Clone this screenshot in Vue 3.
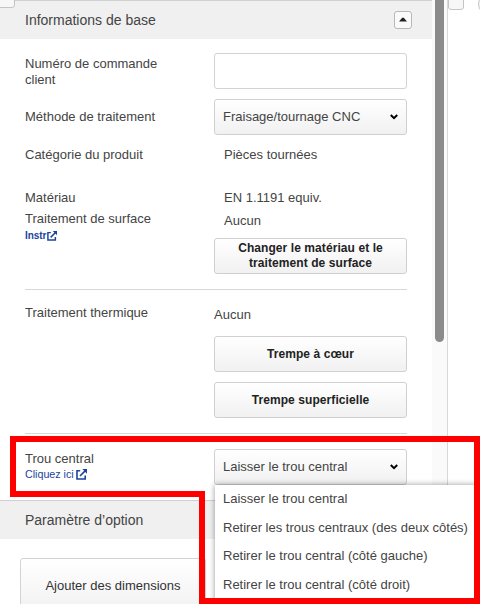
<template>
  <div class="viewport">
    <div class="panel">
      <div class="section-header">
        <span>Informations de base</span>
        <button class="collapse-btn" type="button">
          <svg width="8" height="5" viewBox="0 0 8 5"><path d="M0 4.5L3.2 0.8h1.6L8 4.5z" fill="#222" /></svg>
        </button>
      </div>

      <div class="section-body">
        <div class="row order-row">
          <label class="label order-label">Numéro de commande client</label>
          <input v-model="orderNumber" class="text-input" type="text" />
        </div>

        <div class="row">
          <span class="label">Méthode de traitement</span>
          <div class="select">
            <span>Fraisage/tournage CNC</span>
            <svg class="chevron" width="8" height="6" viewBox="0 0 8 6"><path d="M0.8 1L4 4.2L7.2 1" /></svg>
          </div>
        </div>

        <div class="row category-row">
          <span class="label">Catégorie du produit</span>
          <span class="value indent">Pièces tournées</span>
        </div>

        <div class="row material-row">
          <div class="stack">
            <span class="label">Matériau</span>
            <span class="label surface-label">Traitement de surface</span>
            <a class="link bold">Instr<svg class="ext" width="10" height="10" viewBox="0 0 11 11"><path d="M4.2 1.8H1v8.2h8.2V6.6M4 7L9.4 1.6" /><path class="tip" d="M6.3 0H11v4.7z" /></svg></a>
          </div>
          <div class="stack">
            <span class="value indent">EN 1.1191 equiv.</span>
            <span class="value indent surface-value">Aucun</span>
            <button class="btn material-btn" type="button">Changer le matériau et le traitement de surface</button>
          </div>
        </div>

        <hr class="divider" />

        <div class="row heat-row">
          <span class="label">Traitement thermique</span>
          <div class="stack">
            <span class="value heat-value">Aucun</span>
            <div class="heat-buttons">
              <button v-for="name in heatTreatments" :key="name" class="btn" type="button">{{ name }}</button>
            </div>
          </div>
        </div>

        <hr class="divider" />

        <div class="row hole-row">
          <div class="stack">
            <span class="label">Trou central</span>
            <a class="link">Cliquez ici<svg class="ext large" width="11" height="11" viewBox="0 0 11 11"><path d="M4.2 1.8H1v8.2h8.2V6.6M4 7L9.4 1.6" /><path class="tip" d="M6.3 0H11v4.7z" /></svg></a>
          </div>
          <div class="select">
            <span>{{ holeOptions[0] }}</span>
            <svg class="chevron" width="8" height="6" viewBox="0 0 8 6"><path d="M0.8 1L4 4.2L7.2 1" /></svg>
            <ul class="menu">
              <li v-for="option in holeOptions" :key="option">{{ option }}</li>
            </ul>
          </div>
        </div>
      </div>

      <div class="section-header">
        <span>Paramètre d’option</span>
      </div>
      <div class="option-body">
        <button class="add-btn" type="button">Ajouter des dimensions</button>
      </div>
    </div>

    <div class="scroll-track">
      <div class="scroll-thumb"></div>
    </div>

    <span class="corner corner-left"></span>
    <span class="corner corner-mid"></span>
    <span class="corner corner-right"></span>

    <svg class="highlight" width="480" height="604" viewBox="0 0 480 604">
      <path d="M13 439H477V601H202V494H13Z" />
    </svg>
  </div>
</template>

<script setup>
import { ref } from 'vue';

const orderNumber = ref('');

const heatTreatments = ['Trempe à cœur', 'Trempe superficielle'];

const holeOptions = [
  'Laisser le trou central',
  'Retirer les trous centraux (des deux côtés)',
  'Retirer le trou central (côté gauche)',
  'Retirer le trou central (côté droit)'
];
</script>

<style>
body {
  margin: 0;
  background: #fff;
}
</style>

<style scoped>
.viewport {
  position: relative;
  display: flex;
  width: 480px;
  height: 604px;
  overflow: hidden;
  font-family: 'Liberation Sans', Arial, sans-serif;
  font-size: 13px;
  line-height: 16px;
  color: #444;
  background: #fff;
}

.viewport * {
  box-sizing: border-box;
}

.panel {
  width: 432px;
  flex: none;
}

.section-header {
  display: flex;
  justify-content: space-between;
  align-items: center;
  height: 39px;
  padding: 0 20px 1px 25px;
  border-top: 1px solid #d0d0d0;
  background: #f0f0f0;
  font-size: 14px;
}

.collapse-btn {
  display: flex;
  align-items: center;
  justify-content: center;
  width: 18px;
  height: 18px;
  padding: 0;
  border: 1px solid #b8b8b8;
  border-radius: 3px;
  background: #fafafa;
}

.section-body {
  height: 461px;
  padding: 14px 25px 0;
}

.row {
  display: grid;
  grid-template-columns: 189px 193px;
  align-items: center;
}

.order-row {
  margin-bottom: 10px;
}

.order-label {
  padding: 1px 40px 0 0;
}

.text-input {
  width: 193px;
  height: 36px;
  border: 1px solid #d3d3d3;
  border-radius: 3px;
  background: #fff;
}

.select {
  position: relative;
  display: flex;
  justify-content: space-between;
  align-items: center;
  height: 36px;
  padding: 0 8px;
  border: 1px solid #d0d0d0;
  border-radius: 3px;
  background: linear-gradient(#fff, #f1f1f1);
}

.chevron path {
  fill: none;
  stroke: #000;
  stroke-width: 2;
}

.category-row {
  margin-top: 12px;
}

.indent {
  padding-left: 10px;
}

.stack {
  display: flex;
  flex-direction: column;
}

.material-row {
  align-items: start;
  margin-top: 27px;
}

.surface-label {
  margin-top: 5px;
}

.surface-value {
  margin-top: 7px;
}

.link {
  display: flex;
  align-items: center;
  height: 14px;
  font-size: 10.7px;
  color: #1a44a0;
}

.link.bold {
  margin-top: 2px;
  font-size: 10px;
  font-weight: bold;
  letter-spacing: -0.1px;
}

.ext {
  margin-left: 1px;
}

.ext.large {
  margin-left: 2px;
}

.ext path {
  fill: none;
  stroke: #1a44a0;
  stroke-width: 1.6;
}

.ext .tip {
  fill: #1a44a0;
  stroke: none;
}

.btn {
  width: 193px;
  height: 36px;
  padding: 0 10px;
  border: 1px solid #d0d0d0;
  border-radius: 3px;
  background: linear-gradient(#fff, #f1f1f1);
  font-family: inherit;
  font-size: 12px;
  font-weight: bold;
  line-height: 15px;
  letter-spacing: 0.08px;
  color: #222;
}

.material-btn {
  margin-top: 9px;
}

.divider {
  height: 1px;
  margin: 15px 0 0;
  border: 0;
  background: #d8d8d8;
}

.heat-row {
  align-items: start;
  margin-top: 15px;
}

.heat-value {
  margin-top: 2px;
}

.heat-buttons {
  display: flex;
  flex-direction: column;
  gap: 10px;
  margin-top: 13px;
}

.hole-row {
  align-items: start;
  margin-top: 15px;
}

.hole-row .stack {
  padding-top: 2px;
}

.menu {
  position: absolute;
  top: 35px;
  left: 0;
  width: 262px;
  height: 120px;
  margin: 0;
  padding: 0 8px;
  list-style: none;
  background: #fff;
  box-shadow: 0 0 6px rgba(0, 0, 0, 0.4);
}

.menu li {
  height: 28.7px;
  line-height: 28px;
  white-space: nowrap;
}

.option-body {
  padding: 19px 20px 0;
}

.add-btn {
  width: 186px;
  height: 56px;
  padding: 0 0 1px;
  border: 1px solid #d3d3d3;
  border-radius: 3px;
  background: linear-gradient(#fff, #f1f1f1);
  font-family: inherit;
  font-size: 13px;
  color: #333;
}

/* scrollbar between the form and the preview pane */
.scroll-track {
  width: 16px;
  flex: none;
  border-right: 1px solid #d8d8d8;
  background: #fafafa;
}

.scroll-thumb {
  width: 9px;
  height: 342px;
  margin-left: 3px;
  border-radius: 0 0 5px 5px;
  background: #8b8b8b;
}

/* controls cut off by the top edge */
.corner {
  position: absolute;
  top: -8px;
  height: 16px;
  border: 1px solid #c4c4c4;
  border-radius: 3px;
  background: #f7f7f7;
}

.corner-left {
  left: -8px;
  width: 23px;
}

.corner-mid {
  top: -6px;
  left: 448px;
  width: 16px;
}

.corner-right {
  top: -8px;
  left: 478px;
  width: 24px;
  height: 24px;
  border-radius: 12px;
}

.highlight {
  position: absolute;
  top: 0;
  left: 0;
}

.highlight path {
  fill: none;
  stroke: #f00;
  stroke-width: 6;
}
</style>
